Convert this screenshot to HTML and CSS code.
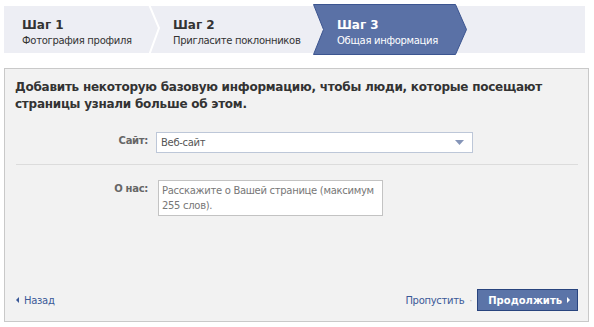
FILE: index.html
```html
<!DOCTYPE html>
<html lang="ru">
<head>
    <meta charset="UTF-8">
    <title>Шаг 3 - Общая информация</title>
    <link rel="stylesheet" href="styles.css">
</head>
<body>
<div class="steps">
    <div class="step step-first">
        <div class="step-title">Шаг 1</div>
        <div class="step-text">Фотография профиля</div>
        <svg class="step-sep" width="16" height="54" viewBox="0 0 16 54">
            <polyline points="2,-2 13,24 2,54" fill="none" stroke="#fff" stroke-width="2"/>
        </svg>
    </div>
    <div class="step step-second">
        <div class="step-title">Шаг 2</div>
        <div class="step-text">Пригласите поклонников</div>
    </div>
    <div class="step step-active">
        <svg class="step-bg" width="155" height="51" viewBox="0 0 155 51">
            <polygon points="0.5,0.5 142.5,0.5 153.5,25.5 142.5,50.5 0.5,50.5 10.5,25.5" fill="#5a71a6" stroke="#3c5590"/>
        </svg>
        <div class="step-title">Шаг 3</div>
        <div class="step-text">Общая информация</div>
    </div>
</div>

<div class="panel">
    <h2 class="intro">Добавить некоторую базовую информацию, чтобы люди, которые посещают страницы узнали больше об этом.</h2>

    <div class="row">
        <div class="label">Сайт:</div>
        <div class="select">
            <span>Веб-сайт</span>
            <svg width="9" height="5" viewBox="0 0 9 5"><polygon points="0,0 9,0 4.5,5" fill="#8595b8"/></svg>
        </div>
    </div>

    <div class="divider"></div>

    <div class="row">
        <div class="label">О нас:</div>
        <div class="textarea">Расскажите о Вашей странице (максимум 255 слов).</div>
    </div>

    <div class="footer">
        <a class="back" href="#"><span class="tri-left"></span>Назад</a>
        <div class="actions">
            <a class="skip" href="#">Пропустить</a>
            <span class="dot">·</span>
            <a class="btn" href="#">Продолжить <span class="tri-right"></span></a>
        </div>
    </div>
</div>
</body>
</html>
```

FILE: styles.css
```css
* {
    padding: 0;
    margin: 0;
}

body {
    font-family: "DejaVu Sans", Tahoma, sans-serif;
    font-size: 10px;
    letter-spacing: -0.3px;
    color: #333;
    background: #fff;
}

a {
    text-decoration: none;
}

.steps {
    display: flex;
    width: 581px;
    height: 47px;
    margin: 6px 0 0 4px;
    background-color: #edeef4;
}

.step {
    position: relative;
    padding-top: 11px;
    box-sizing: border-box;
}

.step-first {
    width: 145px;
    padding-left: 18px;
}

.step-second {
    width: 164px;
    padding-left: 24px;
}

.step-active {
    width: 155px;
    padding-left: 24px;
    color: #fff;
}

.step-sep {
    position: absolute;
    top: -2px;
    right: -13px;
}

.step-bg {
    position: absolute;
    top: -2px;
    left: 0;
}

.step-title,
.step-text {
    position: relative;
}

.step-title {
    font-size: 12px;
    font-weight: bold;
    line-height: 16px;
    letter-spacing: 0;
    color: #333;
}

.step-text {
    font-size: 10px;
    line-height: 15px;
}

.step-active .step-title,
.step-active .step-text {
    color: #fff;
}

.panel {
    display: flex;
    flex-direction: column;
    width: 563px;
    height: 232px;
    margin: 15px 0 0 4px;
    padding: 10px 10px 10px 10px;
    background-color: #f2f2f2;
    border: 1px solid #c9c9c9;
}

.intro {
    font-size: 12px;
    font-weight: bold;
    line-height: 17px;
    letter-spacing: -0.25px;
    color: #333;
    margin-bottom: 19px;
}

.row {
    display: flex;
    align-items: flex-start;
}

.label {
    width: 133px;
    padding-top: 3px;
    text-align: right;
    font-weight: bold;
    font-size: 10px;
    color: #666;
}

.select {
    display: flex;
    justify-content: space-between;
    align-items: center;
    width: 303px;
    height: 19px;
    margin-left: 8px;
    padding: 0 8px 0 4px;
    background: #fff;
    border: 1px solid #bdc7d8;
    color: #555;
}

.divider {
    height: 1px;
    margin: 11px 0 15px 1px;
    background-color: #dcdcdc;
}

.textarea {
    width: 217px;
    height: 30px;
    margin-left: 10px;
    padding: 2px 3px;
    background: #fff;
    border: 1px solid #c3c3c3;
    color: #777;
    line-height: 15px;
}

.footer {
    display: flex;
    justify-content: space-between;
    align-items: center;
    margin-top: auto;
}

.back {
    display: flex;
    align-items: center;
    color: #3b5998;
    padding-left: 1px;
}

.tri-left {
    width: 0;
    height: 0;
    border-top: 3px solid transparent;
    border-bottom: 3px solid transparent;
    border-right: 3px solid #3b5998;
    margin-right: 5px;
}

.actions {
    display: flex;
    align-items: center;
}

.skip {
    color: #3b5998;
}

.dot {
    color: #bbb;
    margin: 0 5px;
}

.btn {
    display: flex;
    align-items: center;
    height: 20px;
    padding: 0 7px 0 10px;
    background-color: #5b74a8;
    border: 1px solid #29447e;
    color: #fff;
    font-weight: bold;
    font-size: 10px;
    letter-spacing: 0;
}

.tri-right {
    width: 0;
    height: 0;
    border-top: 3px solid transparent;
    border-bottom: 3px solid transparent;
    border-left: 3px solid #fff;
    margin-left: 5px;
}
```
